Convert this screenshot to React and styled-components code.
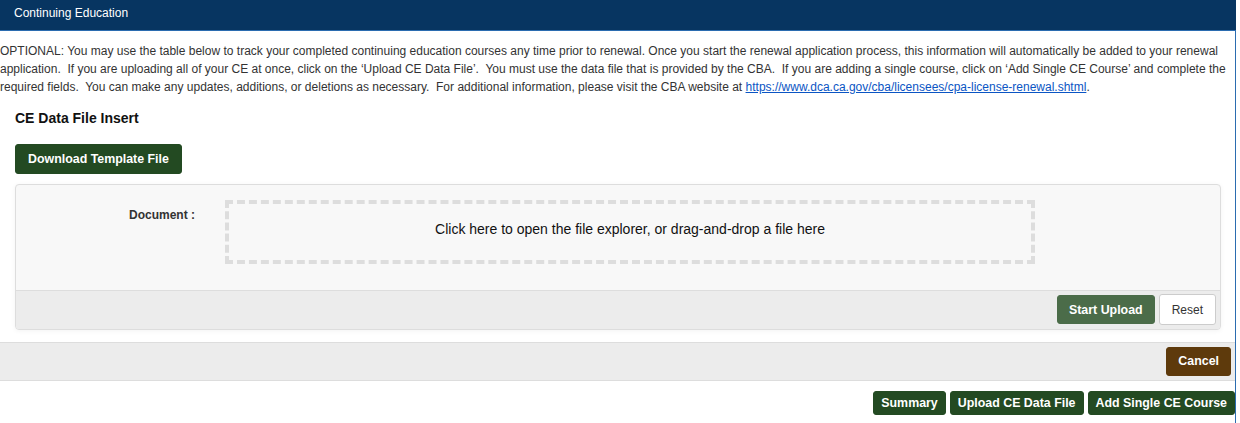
import React from 'react';
import styled, { createGlobalStyle } from 'styled-components';

const GlobalStyle = createGlobalStyle`
  body {
    margin: 0;
    background: #fff;
    font-family: "Liberation Sans", Arial, sans-serif;
    color: #333;
  }
`;

const Panel = styled.div`
  width: 1237px;
  margin-left: -1px;
  min-height: 423px;
  border-right: 1px solid #2b6cb0;
  border-left: 1px solid #2b6cb0;
  box-sizing: border-box;
`;

const Heading = styled.div`
  height: 31px;
  background: #073561;
  border-bottom: 1px solid #2b6cb0;
  color: #fff;
  font-size: 12px;
  display: flex;
  align-items: center;
  padding: 0 0 5px 14px;
  box-sizing: border-box;
  margin-right: -1px;
`;

const Intro = styled.p`
  margin: 11px 0 0 0;
  font-size: 12px;
  line-height: 18px;
  color: #333;
  padding-right: 2px;

  a {
    color: #0b55c4;
    text-decoration: underline;
  }
`;

const Section = styled.div`
  padding: 0 14px 0 15px;
`;

const Title = styled.h4`
  margin: 14px 0 0;
  font-size: 14px;
  line-height: 16px;
  font-weight: bold;
  color: #111;
`;

const Button = styled.button`
  font-family: "Liberation Sans", Arial, sans-serif;
  font-size: ${(p) => (p.light ? 12 : 12.4)}px;
  color: ${(p) => (p.light ? '#333' : '#fff')};
  font-weight: ${(p) => (p.light ? 'normal' : 'bold')};
  background: ${(p) => p.bg || '#234a22'};
  border: 1px solid ${(p) => (p.light ? '#ccc' : p.bg || '#234a22')};
  border-radius: 3px;
  height: ${(p) => p.h || 30}px;
  padding: 0 ${(p) => p.px || 12}px;
  cursor: pointer;
  white-space: nowrap;
`;

const TemplateRow = styled.div`
  margin-top: 18px;
`;

const UploadBox = styled.div`
  margin-top: 10px;
  border: 1px solid #ddd;
  border-radius: 4px;
  background: #f8f8f8;
  box-shadow: 0 1px 5px rgba(0, 0, 0, 0.05);
  overflow: hidden;
`;

const UploadBody = styled.div`
  display: grid;
  grid-template-columns: 179px 810px;
  column-gap: 30px;
  padding: 15px 0 26px;
`;

const Label = styled.label`
  text-align: right;
  font-size: 12px;
  font-weight: bold;
  color: #333;
  padding-top: 8px;
`;

const DropZone = styled.div`
  height: 64px;
  border: 4px dashed #ddd;
  box-sizing: border-box;
  display: flex;
  align-items: center;
  justify-content: center;
  font-size: 14px;
  color: #111;
  padding-bottom: 6px;
  cursor: pointer;
`;

const UploadFooter = styled.div`
  border-top: 1px solid #ddd;
  background: #ececec;
  height: 37px;
  display: flex;
  justify-content: flex-end;
  align-items: center;
  gap: 4px;
  padding: 0 4px 1px 0;
`;

const CancelBar = styled.div`
  margin-top: 12px;
  height: 36px;
  background: #ececec;
  border-top: 1px solid #ddd;
  border-bottom: 1px solid #ddd;
  display: flex;
  justify-content: flex-end;
  align-items: center;
  padding-right: 4px;
  padding-bottom: 1px;
`;

const Actions = styled.div`
  margin-top: 10px;
  display: flex;
  justify-content: flex-end;
  gap: 4px;
`;

const App = () => {
  return (
    <>
      <GlobalStyle />
      <Panel>
        <Heading>Continuing Education</Heading>
        <Intro>
          OPTIONAL: You may use the table below to track your completed continuing education courses any time prior to
          renewal. Once you start the renewal application process, this information will automatically be added to your
          renewal application.&nbsp; If you are uploading all of your CE at once, click on the ‘Upload CE Data File’.&nbsp; You
          must use the data file that is provided by the CBA.&nbsp; If you are adding a single course, click on ‘Add Single CE
          Course’ and complete the required fields.&nbsp; You can make any updates, additions, or deletions as necessary.&nbsp;
          For additional information, please visit the CBA website at{' '}
          <a href="#cpa">https://www.dca.ca.gov/cba/licensees/cpa-license-renewal.shtml</a>.
        </Intro>
        <Section>
          <Title>CE Data File Insert</Title>
          <TemplateRow>
            <Button>Download Template File</Button>
          </TemplateRow>
          <UploadBox>
            <UploadBody>
              <Label>Document :</Label>
              <DropZone>Click here to open the file explorer, or drag-and-drop a file here</DropZone>
            </UploadBody>
            <UploadFooter>
              <Button bg="#4b6c49" h={29} px={11}>Start Upload</Button>
              <Button bg="#fff" light h={31} px={12}>Reset</Button>
            </UploadFooter>
          </UploadBox>
        </Section>
        <CancelBar>
          <Button bg="#5e3a0c" h={29} px={11}>Cancel</Button>
        </CancelBar>
        <Actions>
          <Button h={24} px={7}>Summary</Button>
          <Button h={24} px={7}>Upload CE Data File</Button>
          <Button h={24} px={7}>Add Single CE Course</Button>
        </Actions>
      </Panel>
    </>
  );
};

export default App;
